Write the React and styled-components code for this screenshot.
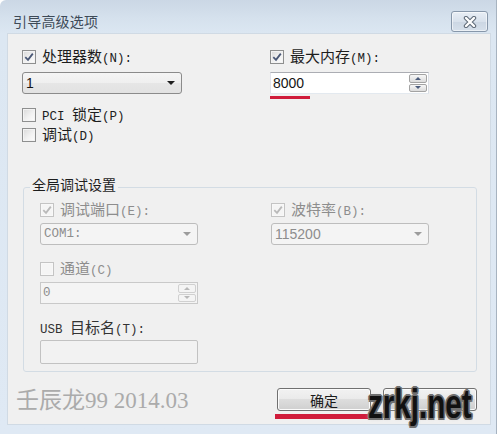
import React from 'react'
import styled, { createGlobalStyle } from 'styled-components'

const GlobalStyle = createGlobalStyle`
  html, body {
    margin: 0;
    padding: 0;
    background: #ffffff;
  }
  body {
    font-family: "Noto Sans CJK SC", "Liberation Sans", sans-serif;
  }
`

// Window frame

const Window = styled.div`
  width: 497px;
  height: 434px;
  box-sizing: border-box;
  display: flex;
  flex-direction: column;
  background: linear-gradient(180deg, #cbd7e5 0px, #d5e1ed 18px, #dce7f2 34px, #dfe9f4 100%);
  border-right: 1px solid #a7b3c0;
  border-top-left-radius: 6px;
  overflow: hidden;
`
const TitleBar = styled.div`
  height: 34px;
  box-sizing: border-box;
  padding: 11px 8px 0 13px;
  display: flex;
  justify-content: space-between;
  align-items: flex-start;
`
const Title = styled.div`
  font-size: 14px;
  line-height: 20px;
  color: #3d4a58;
  letter-spacing: 0.2px;
`
const CloseButton = styled.div`
  width: 37px;
  height: 21px;
  box-sizing: border-box;
  border: 1px solid #8797aa;
  border-radius: 3px;
  background: linear-gradient(#e8eef5, #d8e1ec 50%, #cbd6e3 51%, #d6e0eb);
  box-shadow: inset 0 0 0 1px rgba(255, 255, 255, 0.55);
  display: flex;
  align-items: center;
  justify-content: center;
`
const Client = styled.div`
  flex: 1;
  margin: 0 6px 10px 8px;
  padding-top: 14px;
  background: #f0f0f0;
  box-shadow: 0 0 0 1px #d0dae4;
  display: flex;
  flex-direction: column;
  position: relative;
`

// Labels and checkboxes

const Latin = styled.span`
  font-family: "Liberation Mono", monospace;
  font-size: 12.5px;
`
const Label = styled.span`
  font-size: 15px;
  line-height: 18px;
  white-space: nowrap;
  color: ${(p) => (p.$disabled ? '#8d8d8d' : p.$soft ? '#333333' : '#1d1d1d')};
`
const CheckRow = styled.div`
  height: 18px;
  display: flex;
  align-items: center;
  gap: 6px;
`
const Box = styled.span`
  width: 14px;
  height: 14px;
  box-sizing: border-box;
  flex-shrink: 0;
  border: 1px solid ${(p) => (p.$disabled ? '#c4c4c4' : '#8e8f8f')};
  background: ${(p) =>
    p.$disabled ? '#f5f5f5' : 'linear-gradient(135deg, #d9d9d9, #f1f1f1 55%, #fdfdfd)'};
  box-shadow: inset 0 0 0 1px ${(p) => (p.$disabled ? '#f8f8f8' : '#f3f3f3')};
  display: inline-flex;
  align-items: center;
  justify-content: center;
`

function Text({ children }) {
  return String(children)
    .split(/([\u3000-\u9fff]+)/)
    .map((part, i) =>
      /[\u3000-\u9fff]/.test(part) ? (
        <React.Fragment key={i}>{part}</React.Fragment>
      ) : part ? (
        <Latin key={i}>{part}</Latin>
      ) : null
    )
}

function Check({ checked, disabled, label }) {
  return (
    <CheckRow>
      <Box $disabled={disabled}>
        {checked && (
          <svg width="10" height="10" viewBox="0 0 10 10">
            <path
              d="M1.3 5.2 L4 7.8 L8.8 1.6"
              fill="none"
              stroke={disabled ? '#b9b9b9' : '#4a5876'}
              strokeWidth="1.8"
            />
          </svg>
        )}
      </Box>
      <Label $disabled={disabled}>
        <Text>{label}</Text>
      </Label>
    </CheckRow>
  )
}

// Inputs

const Combo = styled.div`
  width: ${(p) => p.$w}px;
  height: 22px;
  box-sizing: border-box;
  border: 1px solid ${(p) => (p.$disabled ? '#bdbdbd' : '#8b8b8b')};
  border-radius: 3px;
  background: ${(p) =>
    p.$disabled ? '#f4f4f4' : 'linear-gradient(#f5f5f5, #efefef 50%, #e6e6e6 51%, #e2e2e2)'};
  display: flex;
  align-items: center;
  justify-content: space-between;
  padding: 0 6px 0 3px;
`
const Arrow = styled.span`
  width: 0;
  height: 0;
  border-left: 4px solid transparent;
  border-right: 4px solid transparent;
  border-top: 4px solid ${(p) => (p.$disabled ? '#9c9c9c' : '#1e1e1e')};
`
const Value = styled.span`
  font-family: ${(p) => (p.$mono ? '"Liberation Mono", monospace' : '"Liberation Sans", sans-serif')};
  font-size: ${(p) => (p.$mono ? '12.5px' : '14px')};
  color: ${(p) => (p.$disabled ? '#8d8d8d' : '#151515')};
  flex: 1;
`
const SpinBox = styled.div`
  width: ${(p) => p.$w}px;
  height: 22px;
  box-sizing: border-box;
  border: 1px solid;
  border-color: ${(p) =>
    p.$disabled ? '#c9c9c9' : '#abadb3 #dbdfe6 #e3e9ef #e2e3ea'};
  background: ${(p) => (p.$disabled ? '#f4f4f4' : '#ffffff')};
  display: flex;
  align-items: center;
  padding: 1px 1px 1px 2px;
`
const SpinButtons = styled.div`
  width: 18px;
  height: 100%;
  display: flex;
  flex-direction: column;
  gap: 1px;
`
const SpinButton = styled.div`
  flex: 1;
  box-sizing: border-box;
  border: 1px solid ${(p) => (p.$disabled ? '#d0d0d0' : '#a3a3a3')};
  border-radius: 2px;
  background: ${(p) =>
    p.$disabled ? '#f4f4f4' : 'linear-gradient(#f7f7f7, #e9e9e9 50%, #dcdcdc)'};
  display: flex;
  align-items: center;
  justify-content: center;
`
const Tri = styled.span`
  width: 0;
  height: 0;
  border-left: 3px solid transparent;
  border-right: 3px solid transparent;
  ${(p) => (p.$up ? 'border-bottom' : 'border-top')}: 3px solid
    ${(p) => (p.$disabled ? '#b8b8b8' : '#4d5d7c')};
`
const TextBox = styled.div`
  width: 158px;
  height: 24px;
  box-sizing: border-box;
  border: 1px solid #c2c2c2;
  border-radius: 2px;
  background: #f2f2f2;
`

function Spin({ value, w, mono, disabled }) {
  return (
    <SpinBox $w={w} $disabled={disabled}>
      <Value $mono={mono} $disabled={disabled}>{value}</Value>
      <SpinButtons>
        <SpinButton $disabled={disabled}><Tri $up $disabled={disabled} /></SpinButton>
        <SpinButton $disabled={disabled}><Tri $disabled={disabled} /></SpinButton>
      </SpinButtons>
    </SpinBox>
  )
}

// Layout

const TopGrid = styled.div`
  display: grid;
  grid-template-columns: 248px 160px;
  align-items: start;
  padding-left: 14px;
`
const Field = styled.div`
  display: flex;
  flex-direction: column;
  gap: ${(p) => p.$gap || 6}px;
`
const RedMark = styled.div`
  width: ${(p) => p.$w}px;
  height: ${(p) => p.$h}px;
  margin-top: ${(p) => p.$top}px;
  margin-left: ${(p) => p.$left || 0}px;
  background: #d01c3b;
`
const CheckList = styled.div`
  display: flex;
  flex-direction: column;
  gap: 2px;
  margin-top: 7px;
  padding-left: 14px;
`
const Group = styled.fieldset`
  margin: 32px 13px 0 15px;
  padding: 3px 0 7px 0;
  min-width: 0;
  border: 1px solid #d3dce4;
  border-radius: 3px;
`
const Legend = styled.legend`
  margin-left: 6px;
  padding: 0 2px 6px;
  font-size: 14px;
  line-height: 16px;
  color: #1d1d1d;
`
const GroupInner = styled.div`
  display: flex;
  flex-direction: column;
  padding-left: 16px;
`
const GroupGrid = styled.div`
  display: grid;
  grid-template-columns: 231px 158px;
`
const Spaced = styled.div`
  margin-top: ${(p) => p.$top}px;
`
const Footer = styled.div`
  margin-top: 16px;
  padding: 0 13px 0 8px;
  display: flex;
  justify-content: space-between;
  align-items: flex-start;
`
const Stamp = styled.div`
  font-family: "Liberation Serif", "Noto Sans CJK SC", serif;
  font-size: 23px;
  line-height: 26px;
  color: #ababab;
  white-space: pre;
`
const Buttons = styled.div`
  display: flex;
  gap: 12px;
`
const ButtonCol = styled.div`
  display: flex;
  flex-direction: column;
`
const Button = styled.div`
  width: 94px;
  height: 23px;
  box-sizing: border-box;
  border: 1px solid #707070;
  border-radius: 3px;
  background: linear-gradient(#f2f2f2, #ebebeb 45%, #dddddd 50%, #cfcfcf);
  box-shadow: inset 0 0 0 1px #fbfbfb;
  display: flex;
  align-items: center;
  justify-content: center;
  font-size: 14px;
  color: #1a1a1a;
`
const SiteMark = styled.div`
  position: absolute;
  left: 360px;
  top: 350px;
  font-family: "Liberation Sans", sans-serif;
  font-weight: bold;
  font-size: 40px;
  line-height: 40px;
  color: #111111;
  transform: scaleX(0.74);
  transform-origin: left top;
  white-space: nowrap;
  text-shadow: 2px 0 0 #707070, -2px 0 0 #707070, 0 2px 0 #707070, 0 -2px 0 #707070,
    1.5px 1.5px 0 #707070, -1.5px -1.5px 0 #707070, 1.5px -1.5px 0 #707070,
    -1.5px 1.5px 0 #707070, 0 0 5px #cfcfcf;
`

export default function App() {
  return (
    <>
      <GlobalStyle />
      <Window>
        <TitleBar>
          <Title>引导高级选项</Title>
          <CloseButton>
            <svg width="14" height="12" viewBox="0 0 14 12">
              <path d="M3 2 L11 10 M11 2 L3 10" stroke="#5d6977" strokeWidth="4.4" strokeLinecap="round" />
              <path d="M3 2 L11 10 M11 2 L3 10" stroke="#ffffff" strokeWidth="2.4" strokeLinecap="round" />
            </svg>
          </CloseButton>
        </TitleBar>
        <Client>
          <TopGrid>
            <Field>
              <Check checked label="处理器数(N):" />
              <Combo $w={160}>
                <Value>1</Value>
                <Arrow />
              </Combo>
            </Field>
            <Field>
              <Check checked label="最大内存(M):" />
              <div>
                <Spin w={159} value="8000" />
                <RedMark $w={40} $h={3} $top={2} />
              </div>
            </Field>
          </TopGrid>
          <CheckList>
            <Check label="PCI 锁定(P)" />
            <Check label="调试(D)" />
          </CheckList>
          <Group>
            <Legend>全局调试设置</Legend>
            <GroupInner>
              <GroupGrid>
                <Field $gap={4}>
                  <Check checked disabled label="调试端口(E):" />
                  <Combo $w={158} $disabled>
                    <Value $mono $disabled>COM1:</Value>
                    <Arrow $disabled />
                  </Combo>
                </Field>
                <Field $gap={4}>
                  <Check checked disabled label="波特率(B):" />
                  <Combo $w={158} $disabled>
                    <Value $disabled>115200</Value>
                    <Arrow $disabled />
                  </Combo>
                </Field>
              </GroupGrid>
              <Spaced $top={15}>
                <Field $gap={4}>
                  <Check disabled label="通道(C)" />
                  <Spin w={158} value="0" mono disabled />
                </Field>
              </Spaced>
              <Spaced $top={15}>
                <Field $gap={3}>
                  <CheckRow>
                    <Label $soft>
                      <Text>USB 目标名(T):</Text>
                    </Label>
                  </CheckRow>
                  <TextBox />
                </Field>
              </Spaced>
            </GroupInner>
          </Group>
          <Footer>
            <Stamp>壬辰龙99 2014.03</Stamp>
            <Buttons>
              <ButtonCol>
                <Button>确定</Button>
                <RedMark $w={93} $h={5} $top={3} $left={-2} />
              </ButtonCol>
              <ButtonCol>
                {/* cancel button, its caption is hidden under the site mark */}
                <Button />
              </ButtonCol>
            </Buttons>
          </Footer>
          <SiteMark>zrkj.net</SiteMark>
        </Client>
      </Window>
    </>
  )
}
